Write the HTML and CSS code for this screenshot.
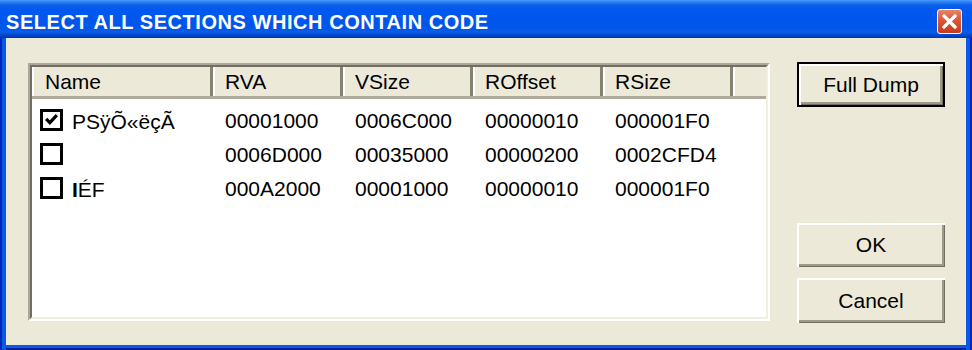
FILE: index.html
```html
<!DOCTYPE html>
<html lang="en">
<head>
    <meta charset="UTF-8">
    <title>Select all sections which contain code</title>
    <link rel="stylesheet" href="styles.css">
</head>
<body>
    <div class="window">
        <div class="titlebar">
            <span class="title">SELECT ALL SECTIONS WHICH CONTAIN CODE</span>
            <span class="close">
                <svg width="15" height="15" viewBox="0 0 15 15">
                    <path d="M2 2 L13 13 M13 2 L2 13" stroke="#fff" stroke-width="3.2" stroke-linecap="square"/>
                </svg>
            </span>
        </div>

        <div class="frame">
            <div class="list">
                <div class="list-inner">
                    <div class="list-header">
                        <div class="hcell first">Name</div>
                        <div class="hcell">RVA</div>
                        <div class="hcell">VSize</div>
                        <div class="hcell">ROffset</div>
                        <div class="hcell">RSize</div>
                        <div class="hcell filler"></div>
                    </div>

                    <div class="list-body">
                        <div class="row">
                            <div class="cell name">
                                <span class="check checked">
                                    <svg width="15" height="15" viewBox="0 0 14 14">
                                        <path d="M2 6.5 L5.5 10 L12 3" fill="none" stroke="#000" stroke-width="3"/>
                                    </svg>
                                </span>
                                <span>PSÿÕ«ëçÃ</span>
                            </div>
                            <div class="cell">00001000</div>
                            <div class="cell">0006C000</div>
                            <div class="cell">00000010</div>
                            <div class="cell">000001F0</div>
                        </div>
                        <div class="row">
                            <div class="cell name">
                                <span class="check"></span>
                                <span></span>
                            </div>
                            <div class="cell">0006D000</div>
                            <div class="cell">00035000</div>
                            <div class="cell">00000200</div>
                            <div class="cell">0002CFD4</div>
                        </div>
                        <div class="row">
                            <div class="cell name">
                                <span class="check"></span>
                                <span><b>I</b>ÉF</span>
                            </div>
                            <div class="cell">000A2000</div>
                            <div class="cell">00001000</div>
                            <div class="cell">00000010</div>
                            <div class="cell">000001F0</div>
                        </div>
                    </div>
                </div>
            </div>

            <div class="buttons">
                <button class="btn default">Full Dump</button>
                <button class="btn push-down">OK</button>
                <button class="btn">Cancel</button>
            </div>
        </div>
    </div>
</body>
</html>
```

FILE: styles.css
```css
* {
    margin: 0;
    padding: 0;
    box-sizing: border-box;
}

body {
    font-family: 'Liberation Sans', Arial, sans-serif;
    font-size: 21px;
    color: #000;
    background: #ece9d8;
}

.window {
    width: 972px;
    height: 350px;
    display: flex;
    flex-direction: column;
}

/* title bar */
.titlebar {
    height: 38px;
    flex: none;
    display: flex;
    align-items: center;
    justify-content: space-between;
    padding: 4px 10px 0 6px;
    background: linear-gradient(to bottom,
        #4a9cff 0, #2d80f5 2px, #0c61ea 5px, #0058ee 10px,
        #0055ea 28px, #0a5de6 32px, #0049d0 35px, #0033b0 38px);
}

.title {
    color: #fff;
    font-weight: bold;
    font-size: 20px;
    line-height: 34px;
    padding-top: 1px;
    letter-spacing: 0.55px;
}

.close {
    width: 25px;
    height: 25px;
    border: 1px solid #fff;
    border-radius: 3px;
    background: linear-gradient(to bottom, #ec8466, #dc5535 45%, #c9391b);
    display: flex;
    align-items: center;
    justify-content: center;
}

/* dialog body */
.frame {
    flex: 1;
    display: flex;
    gap: 27px;
    padding: 24px 27px 27px 28px;
    background: #ece9d8;
    box-shadow:
        inset 2px 0 #0026b8, inset 6px 0 #0a58e6,
        inset -2px 0 #0026b8, inset -6px 0 #0a58e6,
        inset 0 -2px #0020a0, inset 0 -5px #0a58e6;
}

.list {
    width: 742px;
    margin: 1px 0 2px;
    border: 2px solid;
    border-color: #aca899 #fff #fff #aca899;
}

.list-inner {
    height: 100%;
    border: 2px solid;
    border-color: #716f64 #f1efe2 #f1efe2 #716f64;
    background: #fff;
    display: flex;
    flex-direction: column;
}

.list-header {
    display: grid;
    grid-template-columns: 178px repeat(4, 130px) 1fr;
    background: #ece9d8;
    border-bottom: 3px solid #aeab9b;
}

.hcell {
    height: 29px;
    line-height: 28px;
    padding: 1px 0 0 15px;
    white-space: nowrap;
    box-shadow: inset 3px 0 #85826f, inset 5px 0 #fff;
}

.hcell.first {
    padding-left: 13px;
    box-shadow: inset 2px 0 #fff;
}

.list-body {
    padding-top: 5px;
}

.row {
    display: grid;
    grid-template-columns: 178px repeat(4, 130px);
    height: 34px;
    line-height: 33px;
}

.cell {
    padding-left: 15px;
    white-space: nowrap;
}

.cell.name {
    padding-left: 8px;
    display: flex;
    align-items: center;
    gap: 9px;
}

.check {
    width: 23px;
    height: 22px;
    margin-top: -3px;
    border: 3px solid #000;
    background: #fff;
    display: flex;
    align-items: center;
    justify-content: center;
    flex: none;
}

/* buttons */
.buttons {
    width: 148px;
    display: flex;
    flex-direction: column;
    gap: 11px;
}

.btn {
    height: 45px;
    font-family: inherit;
    font-size: 21px;
    color: #000;
    background: #ece9d8;
    border: none;
    box-shadow: inset 2px 2px #fff, inset -1px -1px #716f64, inset -3px -3px #9d9a8a;
}

.btn.default {
    border: 2px solid #000;
}

.btn.push-down {
    margin-top: auto;
    height: 44px;
}
```
